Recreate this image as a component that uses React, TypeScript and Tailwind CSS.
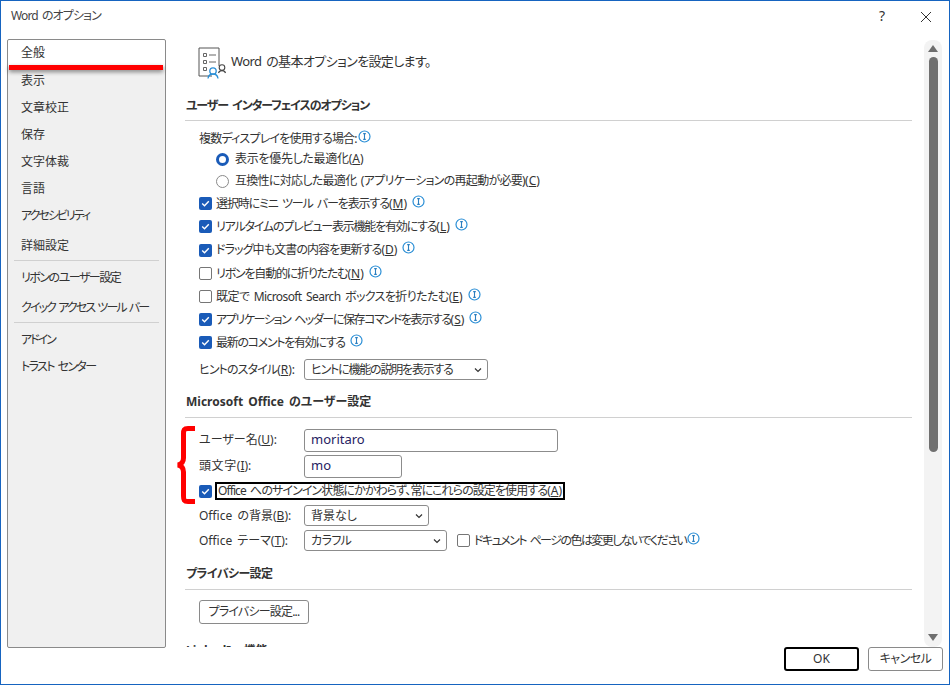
import type { ReactNode } from "react";

const navGroups = [
	[
		{ label: "全般", rowClass: "h-[27px] pb-[1px]", active: true },
		{ label: "表示", rowClass: "h-[27px]" },
		{ label: "文章校正", rowClass: "h-[27px]" },
		{ label: "保存", rowClass: "h-[27px]" },
		{ label: "文字体裁", rowClass: "h-[27px]" },
		{ label: "言語", rowClass: "h-[27px]" },
		{ label: "アクセシビリティ", rowClass: "h-[28px] tracking-[-2px]" },
		{ label: "詳細設定", rowClass: "h-[30px] pt-[2px]" },
	],
	[
		{ label: "リボンのユーザー設定", rowClass: "h-[31px] pt-[2px] tracking-[-1.5px]" },
		{ label: "クイック アクセス ツール バー", rowClass: "h-[30px] pt-[2px] tracking-[-1.9px]" },
	],
	[
		{ label: "アドイン", rowClass: "h-[27px] pt-[6px] tracking-[-2px]" },
		{ label: "トラスト センター", rowClass: "h-[27px] pt-[6px] tracking-[-1.6px]" },
	],
];

const Info = () => (
	<svg width="13" height="13" viewBox="0 0 13 13" className="mb-[5px] ml-[1px] shrink-0">
		<circle cx="6.5" cy="6.5" r="5.5" fill="none" stroke="#2b8fd6" strokeWidth="1.2" />
		<path d="M5.2 3.6h2.6M6.5 3.6v5.8M5.2 9.4h2.6" stroke="#2b7fc0" strokeWidth="1.1" fill="none" />
	</svg>
);

const Check = ({ on = false }: { on?: boolean }) =>
	on ? (
		<span className="flex h-[13px] w-[13px] shrink-0 items-center justify-center rounded-[2px] bg-[#1a5bb8]">
			<svg width="9" height="9" viewBox="0 0 9 9">
				<path d="M1.2 4.6 3.5 6.8 7.8 2.2" fill="none" stroke="white" strokeWidth="1.4" />
			</svg>
		</span>
	) : (
		<span className="h-[13px] w-[13px] shrink-0 rounded-[2px] border border-[#767676] bg-white" />
	);

const Chevron = () => (
	<svg width="8" height="6" viewBox="0 0 8 6" className="shrink-0">
		<path d="M1 1.5 4 4.5 7 1.5" fill="none" stroke="#333" strokeWidth="1.2" />
	</svg>
);

// access key such as (A), keeps normal spacing even in a tightened label
const Key = ({ k }: { k: string }) => (
	<span className="tracking-normal">
		(<u>{k}</u>)
	</span>
);

const Select = ({ label, widthClass, labelClass = "" }: { label: string; widthClass: string; labelClass?: string }) => (
	<div className={`flex h-[21px] items-center justify-between rounded-[3px] border border-[#8c8c8c] pl-[6px] pr-[5px] ${widthClass}`}>
		<span className={labelClass}>{label}</span>
		<Chevron />
	</div>
);

const Field = ({ value, widthClass }: { value: string; widthClass: string }) => (
	<div className={`flex h-[23px] items-center rounded-[3px] border border-[#8c8c8c] pl-[6px] text-[13px] text-[#262262] ${widthClass}`}>
		{value}
	</div>
);

const CheckRow = ({
	on,
	rowClass,
	textClass,
	children,
}: {
	on?: boolean;
	rowClass: string;
	textClass: string;
	children: ReactNode;
}) => (
	<div className={`flex items-center gap-[4px] pl-[14px] ${rowClass}`}>
		<Check on={on} />
		<span className={textClass}>{children}</span>
		<Info />
	</div>
);

const SectionHead = ({ title, rowClass }: { title: string; rowClass: string }) => (
	<div className={`flex items-center border-b border-[#d0d0d0] pl-[1px] font-bold ${rowClass}`}>{title}</div>
);

const PageIcon = () => (
	<svg width="30" height="32" viewBox="0 0 30 32" className="shrink-0">
		<path d="M21 19V1H1v28h13" fill="none" stroke="#555" strokeWidth="1" />
		<path d="M5.5 6.5h3v3h-3zM5.5 13.5h3v3h-3zM5.5 20.5h3v3h-3z" fill="none" stroke="#666" strokeWidth="1" />
		<path d="M11 8h7M11 15h7" stroke="#666" strokeWidth="1" />
		<circle cx="15" cy="24" r="3.2" fill="none" stroke="#2b8fd6" strokeWidth="1.3" />
		<path d="M10 31.5c.5-3.5 2.5-4.5 5-4.5s4.5 1 5 4.5" fill="none" stroke="#2b8fd6" strokeWidth="1.3" />
		<circle cx="24" cy="20.5" r="2.8" fill="none" stroke="#444" strokeWidth="1.1" />
		<path d="M20.5 26c.6-2 2-2.4 3.5-2.4s3 .5 3.5 2.4" fill="none" stroke="#444" strokeWidth="1.1" />
	</svg>
);

const App = () => {
	return (
		<div
			className={`relative flex h-[685px] w-[950px] flex-col overflow-hidden border border-[#1664c0] bg-white text-[12px] text-[#333] [font-family:"Noto_Sans","Noto_Sans_CJK_JP",sans-serif] [font-feature-settings:"palt"] [word-spacing:2px]`}
		>
			<header className="flex h-[38px] shrink-0 items-start justify-between pl-[10px] pr-[17px] pt-[6px] text-[#444]">
				<span className="tracking-[-0.9px]">Word のオプション</span>
				<div className="flex items-center gap-[35px]">
					<span className="-mt-[2px] text-[14px] text-[#333]">?</span>
					<svg width="12" height="12" viewBox="0 0 12 12">
						<path d="M1 1 11 11M11 1 1 11" stroke="#333" strokeWidth="1" />
					</svg>
				</div>
			</header>

			<div className="flex min-h-0 flex-1 pl-[6px] pr-[7px]">
				<nav className="h-[609px] w-[159px] shrink-0 whitespace-nowrap rounded-[2px] border border-[#8a8a8a] bg-[#f0f0f0]">
					{navGroups.map((group, i) => (
						<div key={i}>
							{i > 0 && <div className="mx-[6px] border-t border-[#d0d0d0]" />}
							{group.map((item) => (
								<div
									key={item.label}
									className={`flex items-center pl-[13px] ${item.rowClass} ${item.active ? "rounded-[2px] bg-white" : ""}`}
								>
									{item.label}
								</div>
							))}
						</div>
					))}
				</nav>

				<main className="ml-[19px] h-[608px] min-w-0 flex-1 overflow-hidden whitespace-nowrap pr-[12px]">
					<div className="flex h-[45px] items-start gap-[3px] pl-[13px] pt-[8px]">
						<PageIcon />
						<span className="mt-[5px] text-[13px] tracking-[-0.6px]">Word の基本オプションを設定します。</span>
					</div>
					<SectionHead
						title="ユーザー インターフェイスのオプション"
						rowClass="mt-[7px] h-[30px] tracking-[-1.1px]"
					/>
					<div className="mt-[9px] flex h-[18px] items-center pl-[14px]">
						<span className="tracking-[-0.8px]">複数ディスプレイを使用する場合:</span>
						<Info />
					</div>
					<div className="flex h-[22px] items-center gap-[6px] pl-[31px]">
						<span className="h-[13px] w-[13px] rounded-full border-[3.5px] border-[#1a5bb8] bg-white" />
						<span className="tracking-[-0.3px]">
							表示を優先した最適化<Key k="A" />
						</span>
					</div>
					<div className="flex h-[22px] items-center gap-[6px] pl-[31px]">
						<span className="h-[13px] w-[13px] rounded-full border border-[#8a8a8a] bg-white" />
						<span className="tracking-[-0.7px]">
							互換性に対応した最適化 (アプリケーションの再起動が必要)<Key k="C" />
						</span>
					</div>
					<CheckRow on rowClass="h-[23px]" textClass="tracking-[-1.1px]">
						選択時にミニ ツール バーを表示する<Key k="M" />
					</CheckRow>
					<CheckRow on rowClass="h-[23px]" textClass="tracking-[-1.2px]">
						リアルタイムのプレビュー表示機能を有効にする<Key k="L" />
					</CheckRow>
					<CheckRow on rowClass="h-[24px]" textClass="tracking-[-0.9px]">
						ドラッグ中も文書の内容を更新する<Key k="D" />
					</CheckRow>
					<CheckRow rowClass="h-[23px]" textClass="tracking-[-1.2px]">
						リボンを自動的に折りたたむ<Key k="N" />
					</CheckRow>
					<CheckRow rowClass="h-[23px]" textClass="tracking-[-0.6px]">
						既定で Microsoft Search ボックスを折りたたむ<Key k="E" />
					</CheckRow>
					<CheckRow on rowClass="h-[23px]" textClass="tracking-[-1.4px]">
						アプリケーション ヘッダーに保存コマンドを表示する<Key k="S" />
					</CheckRow>
					<CheckRow on rowClass="h-[23px]" textClass="tracking-[-1.3px]">
						最新のコメントを有効にする
					</CheckRow>
					<div className="mt-[3px] flex h-[25px] items-center pl-[14px]">
						<span className="w-[105px] tracking-[-0.9px]">
							ヒントのスタイル<Key k="R" />:
						</span>
						<Select label="ヒントに機能の説明を表示する" labelClass="tracking-[-1.2px]" widthClass="w-[184px]" />
					</div>
					<SectionHead title="Microsoft Office のユーザー設定" rowClass="mt-[4px] h-[32px]" />
					<div className="mt-[9px] flex h-[26px] items-center pl-[14px]">
						<span className="w-[105px]">
							ユーザー名<Key k="U" />:
						</span>
						<Field value="moritaro" widthClass="w-[254px]" />
					</div>
					<div className="flex h-[26px] items-center pl-[14px]">
						<span className="w-[105px] tracking-[0.6px]">
							頭文字<Key k="I" />:
						</span>
						<Field value="mo" widthClass="w-[98px]" />
					</div>
					<div className="flex h-[24px] items-center gap-[3px] pl-[14px]">
						<Check on />
						<span className="flex h-[18px] w-[350px] items-center whitespace-nowrap border-2 border-black pl-[1px] tracking-[-0.9px]">
							<span>
								Office へのサインイン状態にかかわらず、常にこれらの設定を使用する<Key k="A" />
							</span>
						</span>
					</div>
					<div className="flex h-[25px] items-center pl-[14px]">
						<span className="w-[105px]">
							Office の背景<Key k="B" />:
						</span>
						<Select label="背景なし" widthClass="w-[125px]" />
					</div>
					<div className="flex h-[25px] items-center pl-[14px]">
						<span className="w-[105px]">
							Office テーマ<Key k="T" />:
						</span>
						<Select label="カラフル" labelClass="tracking-[-0.6px]" widthClass="w-[143px]" />
						<span className="ml-[10px] mr-[4px] flex">
							<Check />
						</span>
						<span className="tracking-[-1.55px]">ドキュメント ページの色は変更しないでください</span>
						<Info />
					</div>
					<SectionHead title="プライバシー設定" rowClass="mt-[6px] h-[31px] tracking-[-0.6px]" />
					<div className="mt-[10px] pl-[14px]">
						<button className="h-[24px] w-[110px] rounded-[3px] border border-[#8a8a8a] tracking-[-0.8px]">
							プライバシー設定...
						</button>
					</div>
					<div className="mt-[19px] pl-[1px] font-bold leading-[16px]">LinkedIn 機能</div>
				</main>

				<aside className="mt-[1px] h-[607px] w-[18px] shrink-0 rounded-[8px] bg-[#f3f3f3]">
					<div className="flex h-full flex-col items-center pt-[5px]">
						<svg width="10" height="7" viewBox="0 0 10 7" className="shrink-0">
							<path d="M5 0 10 7H0z" fill="#6e6e6e" />
						</svg>
						<div className="mt-[5px] h-[395px] w-[9px] rounded-[5px] bg-[#707070]" />
						<svg width="10" height="7" viewBox="0 0 10 7" className="mb-[6px] mt-auto shrink-0">
							<path d="M0 0h10L5 7z" fill="#6e6e6e" />
						</svg>
					</div>
				</aside>
			</div>

			<footer className="flex h-[37px] shrink-0 items-start justify-end gap-[9px] pr-[6px]">
				<button className="h-[24px] w-[75px] rounded-[3px] border-2 border-black">OK</button>
				<button className="h-[24px] w-[75px] rounded-[3px] border border-[#8a8a8a] tracking-[-0.5px]">キャンセル</button>
			</footer>

			{/* red marks drawn over the dialog */}
			<div className="absolute left-[8px] top-[64px] h-[5px] w-[154px] bg-[#ff0000] shadow-[0_2px_4px_rgba(0,0,0,0.45)]" />
			<svg width="22" height="82" viewBox="0 0 22 82" className="absolute left-[175px] top-[423px]">
				<path
					d="M19 4.5H12C8 4.5 7.5 6 7.5 10V34C7.5 38 6 40 2 41 6 42 7.5 44 7.5 48V72C7.5 76 8 77.5 12 77.5H19"
					fill="none"
					stroke="#ff0000"
					strokeWidth="5"
				/>
			</svg>
		</div>
	);
};

export default App;
